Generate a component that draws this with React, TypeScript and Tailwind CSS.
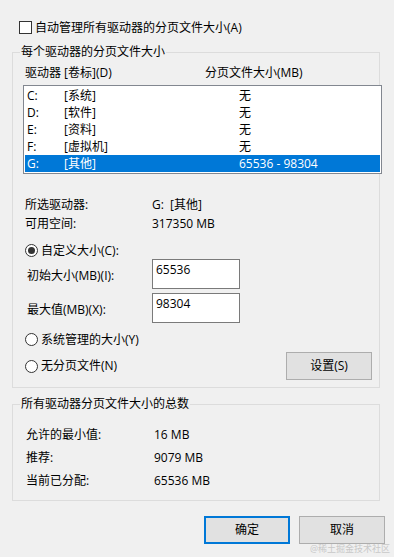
const drives = [
  { letter: "C:", label: "[系统]", size: "无" },
  { letter: "D:", label: "[软件]", size: "无" },
  { letter: "E:", label: "[资料]", size: "无" },
  { letter: "F:", label: "[虚拟机]", size: "无" },
  { letter: "G:", label: "[其他]", size: "65536 - 98304", selected: true },
];

const totals = [
  { label: "允许的最小值:", value: "16 MB" },
  { label: "推荐:", value: "9079 MB" },
  { label: "当前已分配:", value: "65536 MB" },
];

function Radio({ checked, label }: { checked?: boolean; label: string }) {
  return (
    <div className="flex items-center h-[17px] pl-[12px]">
      <span className="w-[13px] h-[13px] rounded-full border border-[#333333] bg-white flex items-center justify-center">
        {checked && <span className="w-[7px] h-[7px] rounded-full bg-[#333333]" />}
      </span>
      <span className="ml-[3px]">{label}</span>
    </div>
  );
}

function Field({ label, value, className }: { label: string; value: string; className?: string }) {
  return (
    <div className={"flex items-center pl-[14px] " + (className ?? "")}>
      <span className="w-[125px] pt-[3px]">{label}</span>
      <div className="w-[88px] h-[30px] border border-[#7a7a7a] bg-white pl-[3px] pt-[2px]">{value}</div>
    </div>
  );
}

export default function App() {
  return (
    <div
      className="relative w-[394px] h-[557px] bg-[#f0f0f0] text-[12px] leading-[16px] text-black pt-[19px] overflow-hidden"
      style={{ fontFamily: '"Open Sans", "Noto Sans CJK SC", sans-serif' }}
    >
      <label className="flex items-center h-[17px] pl-[19px]">
        <span className="w-[13px] h-[13px] border border-[#333333] bg-white" />
        <span className="ml-[3px]">自动管理所有驱动器的分页文件大小(A)</span>
      </label>

      <section className="relative mt-[16px] ml-[12px] w-[368px] h-[336px] border border-[#dcdcdc]">
        <span className="absolute -top-[9px] left-[7px] px-[1px] bg-[#f0f0f0]">每个驱动器的分页文件大小</span>

        <div className="flex mt-[12px] pl-[12px]">
          <span className="w-[180px]">驱动器 [卷标](D)</span>
          <span>分页文件大小(MB)</span>
        </div>

        <div className="mt-[4px] ml-[10px] w-[359px] border border-[#828790] bg-white p-[1px]">
          {drives.map((d) => (
            <div
              key={d.letter}
              className={
                "flex items-center h-[17px] pl-[2px] " +
                (d.selected ? "bg-[#0078d7] text-white" : "")
              }
            >
              <span className="w-[37px]">{d.letter}</span>
              <span className="w-[175px]">{d.label}</span>
              <span>{d.size}</span>
            </div>
          ))}
        </div>

        <div className="mt-[21px] pl-[12px]">
          <div className="flex items-center h-[19px]">
            <span className="w-[127px]">所选驱动器:</span>
            <span>G:&nbsp;&nbsp;[其他]</span>
          </div>
          <div className="flex items-center h-[19px]">
            <span className="w-[127px]">可用空间:</span>
            <span>317350 MB</span>
          </div>
        </div>

        <div className="mt-[9px]">
          <Radio checked label="自定义大小(C):" />
        </div>
        <Field label="初始大小(MB)(I):" value="65536" />
        <Field label="最大值(MB)(X):" value="98304" className="mt-[4px]" />
        <div className="mt-[8px]">
          <Radio label="系统管理的大小(Y)" />
        </div>
        <div className="mt-[4px] flex items-center justify-between pr-[7px]">
          <Radio label="无分页文件(N)" />
          <button className="w-[86px] h-[28px] bg-[#e1e1e1] border border-[#adadad]">设置(S)</button>
        </div>
      </section>

      <section className="relative mt-[16px] ml-[12px] w-[368px] h-[97px] border border-[#dcdcdc]">
        <span className="absolute -top-[9px] left-[7px] px-[1px] bg-[#f0f0f0]">所有驱动器分页文件大小的总数</span>
        <div className="mt-[18px] pl-[13px]">
          {totals.map((t) => (
            <div key={t.label} className="flex items-center h-[23px]">
              <span className="w-[128px]">{t.label}</span>
              <span>{t.value}</span>
            </div>
          ))}
        </div>
      </section>

      <div className="mt-[15px] flex justify-end gap-[9px] pr-[9px]">
        <button className="w-[86px] h-[28px] bg-[#e1e1e1] border-2 border-[#0078d7]">确定</button>
        <button className="w-[86px] h-[28px] bg-[#e1e1e1] border border-[#adadad]">取消</button>
      </div>

      <span className="absolute right-[4px] bottom-[3px] text-[9px] leading-[10px] text-[#c8c8c8]">@稀土掘金技术社区</span>
    </div>
  );
}
